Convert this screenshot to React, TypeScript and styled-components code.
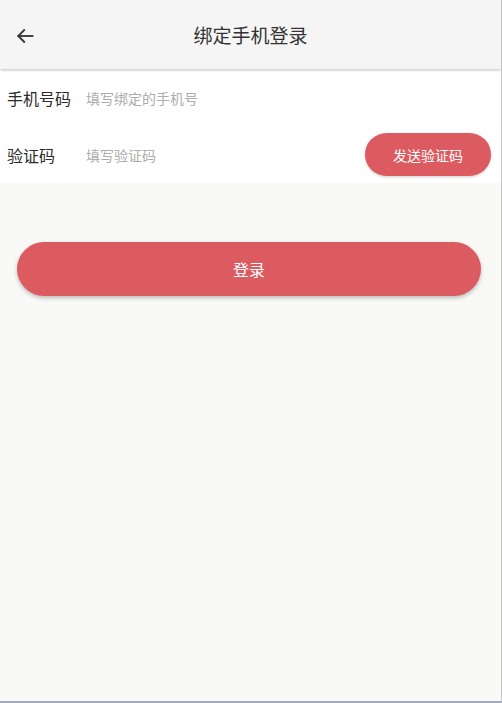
import * as React from "react";
import styled, { createGlobalStyle } from "styled-components";

const GlobalStyle = createGlobalStyle`
  html, body {
    margin: 0;
    padding: 0;
    background: #f9faf8;
  }
  body {
    font-family: "Noto Sans CJK SC", "Noto Sans", sans-serif;
  }
`;

const Page = styled.div`
  width: 502px;
  height: 703px;
  box-sizing: border-box;
  background: #f9faf8;
  border-right: 1px solid #c4c6c8;
  border-bottom: 2px solid #9fabbb;
  display: flex;
  flex-direction: column;
  overflow: hidden;
`;

const Header = styled.header`
  position: relative;
  z-index: 2;
  height: 69px;
  flex-shrink: 0;
  background: #f5f5f5;
  box-shadow: 0 1px 3px rgba(0, 0, 0, 0.25);
  display: flex;
  align-items: center;
  justify-content: center;
`;

const BackButton = styled.button`
  position: absolute;
  left: 12px;
  top: 23px;
  width: 26px;
  height: 26px;
  padding: 0;
  border: none;
  background: transparent;
  display: flex;
  align-items: center;
  justify-content: center;
`;

const Title = styled.h1`
  margin: 0;
  font-size: 19px;
  font-weight: 400;
  color: #333;
`;

const Form = styled.section`
  background: #fff;
`;

const Row = styled.div`
  height: 57px;
  display: flex;
  align-items: center;
  padding: 0 10px 0 7px;
`;

const Label = styled.label`
  width: 79px;
  flex-shrink: 0;
  font-size: 16px;
  color: #2b2b2b;
`;

const Input = styled.input`
  flex: 1;
  min-width: 0;
  border: none;
  outline: none;
  background: transparent;
  font-family: inherit;
  font-size: 14px;
  color: #333;
  padding: 0;
  &::placeholder {
    color: #adadad;
  }
`;

const SendButton = styled.button`
  width: 126px;
  height: 43px;
  flex-shrink: 0;
  border: none;
  border-radius: 22px;
  background: #dc5b61;
  color: #fff;
  font-family: inherit;
  font-size: 14px;
  box-shadow: 0 1px 3px rgba(0, 0, 0, 0.2);
`;

const Actions = styled.div`
  padding: 59px 20px 0 17px;
`;

const LoginButton = styled.button`
  width: 100%;
  height: 54px;
  border: none;
  border-radius: 27px;
  background: #dc5b61;
  color: #fff;
  font-family: inherit;
  font-size: 16px;
  box-shadow: 0 2px 4px rgba(0, 0, 0, 0.25);
`;

const ArrowIcon = () => (
  <svg width="20" height="20" viewBox="0 0 24 24" fill="none" stroke="#333" strokeWidth="2.2" strokeLinecap="square">
    <path d="M21 12H4" />
    <path d="M11 5l-7 7 7 7" />
  </svg>
);

export default function App() {
  return (
    <>
      <GlobalStyle />
      <Page>
        <Header>
          <BackButton aria-label="返回">
            <ArrowIcon />
          </BackButton>
          <Title>绑定手机登录</Title>
        </Header>
        <Form>
          <Row>
            <Label>手机号码</Label>
            <Input placeholder="填写绑定的手机号" />
          </Row>
          <Row>
            <Label>验证码</Label>
            <Input placeholder="填写验证码" />
            <SendButton>发送验证码</SendButton>
          </Row>
        </Form>
        <Actions>
          <LoginButton>登录</LoginButton>
        </Actions>
      </Page>
    </>
  );
}
